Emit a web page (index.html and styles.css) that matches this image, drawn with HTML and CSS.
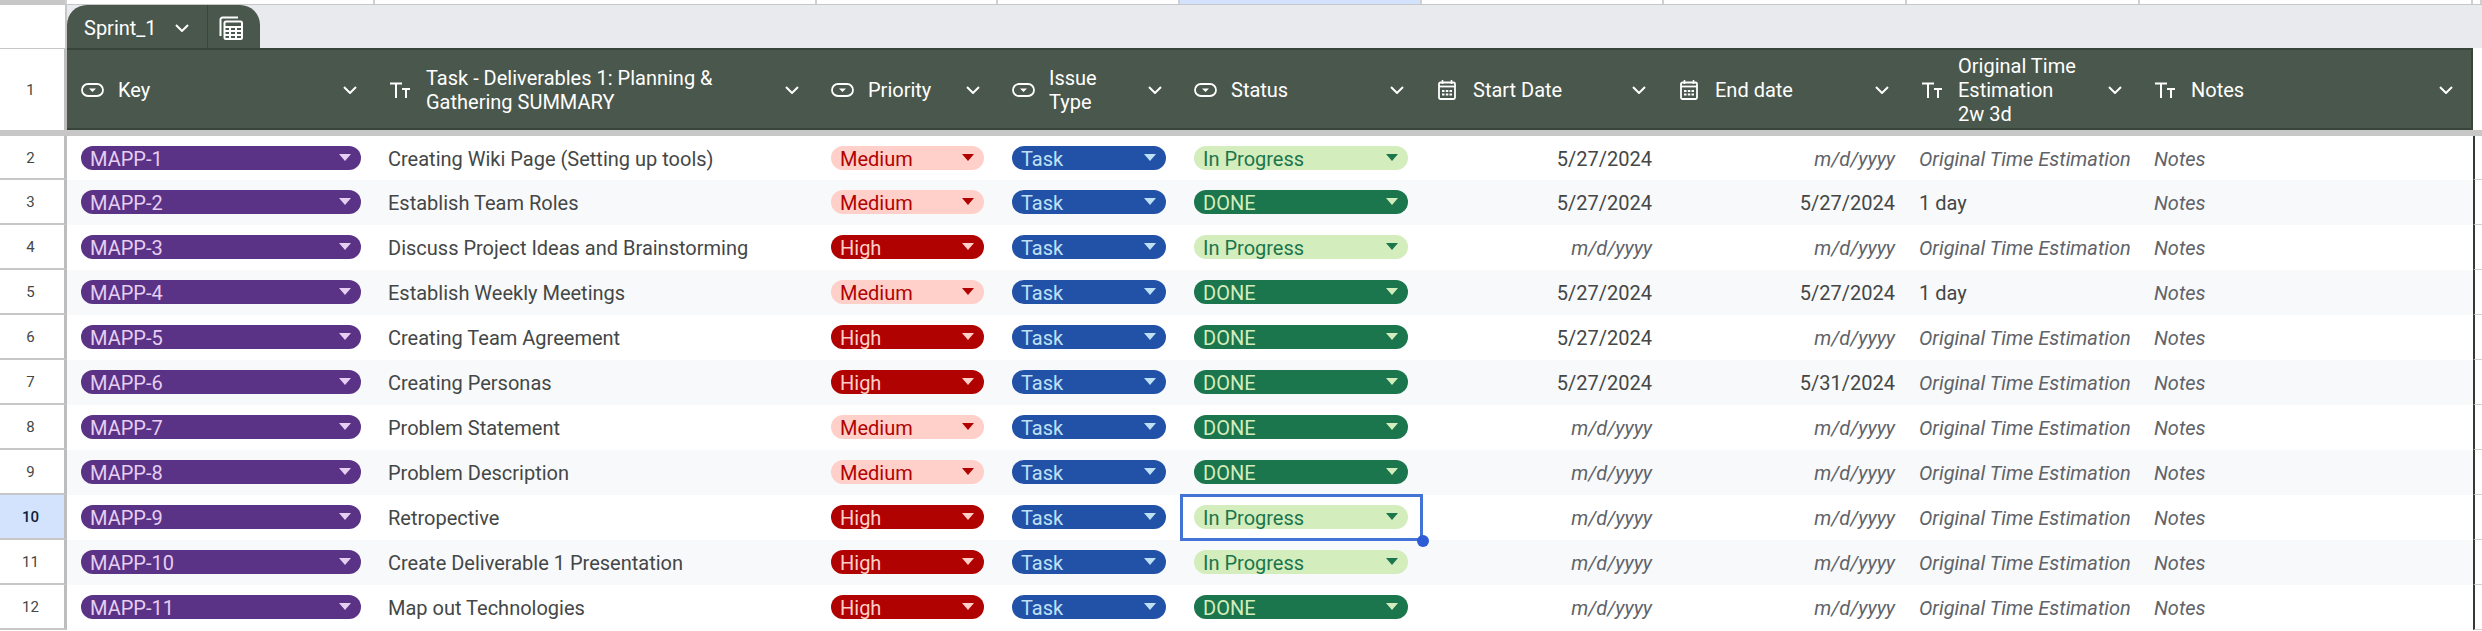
FILE: index.html
```html
<!DOCTYPE html>
<html>
  <head>
    <title>Sprint_1</title>
    <link rel="stylesheet" href="styles.css">
  </head>
  <body>
    <svg class="icon-defs" width="0" height="0">
      <symbol id="i-chevron" viewBox="0 0 14 8"><path d="M1 1l6 6 6-6" fill="none" stroke="currentColor" stroke-width="2"/></symbol>
      <symbol id="i-dropdown" viewBox="0 0 23 14"><rect x="1" y="1" width="21" height="12" rx="6" fill="none" stroke="currentColor" stroke-width="1.8"/><path d="M8 5.500h7l-3.500 3.500z" fill="currentColor"/></symbol>
      <symbol id="i-text" viewBox="0 0 20 16"><path d="M0 1.500h12M6 1.500V16M12 7h8M16 7v9" fill="none" stroke="currentColor" stroke-width="2"/></symbol>
      <symbol id="i-date" viewBox="0 0 18 20"><path d="M4.500 0v4M13.500 0v4" stroke="currentColor" stroke-width="1.600"/><rect x="1" y="2.500" width="16" height="16.500" rx="1.500" fill="none" stroke="currentColor" stroke-width="1.800"/><path d="M1 6.500h16" stroke="currentColor" stroke-width="1.800"/><path d="M4 10h2.500v2H4zM7.800 10h2.500v2H7.800zM11.500 10H14v2h-2.500zM4 13.500h2.500v2H4zM7.800 13.500h2.500v2H7.800zM11.500 13.500H14v2h-2.500z" fill="currentColor"/></symbol>
      <symbol id="i-calc" viewBox="0 0 24 24"><path d="M1.500 20V3.500a2 2 0 0 1 2-2H19" fill="none" stroke="currentColor" stroke-width="2"/><rect x="5.500" y="5.500" width="17.500" height="17.500" rx="1.500" fill="none" stroke="currentColor" stroke-width="2"/><path d="M5.500 11h17.500M5.500 15h17.500M5.500 19h17.500M11 11v12M17 11v12" fill="none" stroke="currentColor" stroke-width="2"/></symbol>
    </svg>

    <!-- column strip -->
    <div class="grid ruler">
      <div></div><div></div><div></div><div></div><div></div>
      <div class="ruler-active"></div><div></div><div></div><div></div><div></div><div></div>
    </div>

    <!-- table tab -->
    <div class="tabbar">
      <div class="tabbar-gutter"></div>
      <div class="tab">
        <span class="tab-name">Sprint_1</span>
        <svg class="tab-chevron"><use href="#i-chevron"/></svg>
        <span class="tab-sep"></span>
        <svg class="tab-calc"><use href="#i-calc"/></svg>
      </div>
    </div>

    <!-- header row -->
    <div class="grid header-row">
      <div class="gutter">1</div>
      <div class="hcell"><svg class="hicon icon-dropdown"><use href="#i-dropdown"/></svg><span class="hlabel">Key</span><svg class="hchevron"><use href="#i-chevron"/></svg></div>
      <div class="hcell"><svg class="hicon icon-text"><use href="#i-text"/></svg><span class="hlabel">Task - Deliverables 1: Planning &amp;<br>Gathering SUMMARY</span><svg class="hchevron"><use href="#i-chevron"/></svg></div>
      <div class="hcell"><svg class="hicon icon-dropdown"><use href="#i-dropdown"/></svg><span class="hlabel">Priority</span><svg class="hchevron"><use href="#i-chevron"/></svg></div>
      <div class="hcell"><svg class="hicon icon-dropdown"><use href="#i-dropdown"/></svg><span class="hlabel">Issue<br>Type</span><svg class="hchevron"><use href="#i-chevron"/></svg></div>
      <div class="hcell"><svg class="hicon icon-dropdown"><use href="#i-dropdown"/></svg><span class="hlabel">Status</span><svg class="hchevron"><use href="#i-chevron"/></svg></div>
      <div class="hcell"><svg class="hicon icon-date"><use href="#i-date"/></svg><span class="hlabel">Start Date</span><svg class="hchevron"><use href="#i-chevron"/></svg></div>
      <div class="hcell"><svg class="hicon icon-date"><use href="#i-date"/></svg><span class="hlabel">End date</span><svg class="hchevron"><use href="#i-chevron"/></svg></div>
      <div class="hcell"><svg class="hicon icon-text"><use href="#i-text"/></svg><span class="hlabel">Original Time<br>Estimation<br>2w 3d</span><svg class="hchevron"><use href="#i-chevron"/></svg></div>
      <div class="hcell"><svg class="hicon icon-text"><use href="#i-text"/></svg><span class="hlabel">Notes</span><svg class="hchevron"><use href="#i-chevron"/></svg></div>
      <div class="header-end"></div>
    </div>

    <div class="freeze-band"></div>

    <!-- data rows -->
    <div class="grid row first">
      <div class="gutter">2</div>
      <div class="cell"><span class="pill key">MAPP-1</span></div>
      <div class="cell">Creating Wiki Page (Setting up tools)</div>
      <div class="cell"><span class="pill medium">Medium</span></div>
      <div class="cell"><span class="pill task">Task</span></div>
      <div class="cell"><span class="pill progress">In Progress</span></div>
      <div class="cell date">5/27/2024</div>
      <div class="cell date hint">m/d/yyyy</div>
      <div class="cell hint">Original Time Estimation</div>
      <div class="cell hint">Notes</div>
      <div class="row-end"></div>
    </div>
    <div class="grid row alt">
      <div class="gutter">3</div>
      <div class="cell"><span class="pill key">MAPP-2</span></div>
      <div class="cell">Establish Team Roles</div>
      <div class="cell"><span class="pill medium">Medium</span></div>
      <div class="cell"><span class="pill task">Task</span></div>
      <div class="cell"><span class="pill done">DONE</span></div>
      <div class="cell date">5/27/2024</div>
      <div class="cell date">5/27/2024</div>
      <div class="cell">1 day</div>
      <div class="cell hint">Notes</div>
      <div class="row-end"></div>
    </div>
    <div class="grid row">
      <div class="gutter">4</div>
      <div class="cell"><span class="pill key">MAPP-3</span></div>
      <div class="cell">Discuss Project Ideas and Brainstorming</div>
      <div class="cell"><span class="pill high">High</span></div>
      <div class="cell"><span class="pill task">Task</span></div>
      <div class="cell"><span class="pill progress">In Progress</span></div>
      <div class="cell date hint">m/d/yyyy</div>
      <div class="cell date hint">m/d/yyyy</div>
      <div class="cell hint">Original Time Estimation</div>
      <div class="cell hint">Notes</div>
      <div class="row-end"></div>
    </div>
    <div class="grid row alt">
      <div class="gutter">5</div>
      <div class="cell"><span class="pill key">MAPP-4</span></div>
      <div class="cell">Establish Weekly Meetings</div>
      <div class="cell"><span class="pill medium">Medium</span></div>
      <div class="cell"><span class="pill task">Task</span></div>
      <div class="cell"><span class="pill done">DONE</span></div>
      <div class="cell date">5/27/2024</div>
      <div class="cell date">5/27/2024</div>
      <div class="cell">1 day</div>
      <div class="cell hint">Notes</div>
      <div class="row-end"></div>
    </div>
    <div class="grid row">
      <div class="gutter">6</div>
      <div class="cell"><span class="pill key">MAPP-5</span></div>
      <div class="cell">Creating Team Agreement</div>
      <div class="cell"><span class="pill high">High</span></div>
      <div class="cell"><span class="pill task">Task</span></div>
      <div class="cell"><span class="pill done">DONE</span></div>
      <div class="cell date">5/27/2024</div>
      <div class="cell date hint">m/d/yyyy</div>
      <div class="cell hint">Original Time Estimation</div>
      <div class="cell hint">Notes</div>
      <div class="row-end"></div>
    </div>
    <div class="grid row alt">
      <div class="gutter">7</div>
      <div class="cell"><span class="pill key">MAPP-6</span></div>
      <div class="cell">Creating Personas</div>
      <div class="cell"><span class="pill high">High</span></div>
      <div class="cell"><span class="pill task">Task</span></div>
      <div class="cell"><span class="pill done">DONE</span></div>
      <div class="cell date">5/27/2024</div>
      <div class="cell date">5/31/2024</div>
      <div class="cell hint">Original Time Estimation</div>
      <div class="cell hint">Notes</div>
      <div class="row-end"></div>
    </div>
    <div class="grid row">
      <div class="gutter">8</div>
      <div class="cell"><span class="pill key">MAPP-7</span></div>
      <div class="cell">Problem Statement</div>
      <div class="cell"><span class="pill medium">Medium</span></div>
      <div class="cell"><span class="pill task">Task</span></div>
      <div class="cell"><span class="pill done">DONE</span></div>
      <div class="cell date hint">m/d/yyyy</div>
      <div class="cell date hint">m/d/yyyy</div>
      <div class="cell hint">Original Time Estimation</div>
      <div class="cell hint">Notes</div>
      <div class="row-end"></div>
    </div>
    <div class="grid row alt">
      <div class="gutter">9</div>
      <div class="cell"><span class="pill key">MAPP-8</span></div>
      <div class="cell">Problem Description</div>
      <div class="cell"><span class="pill medium">Medium</span></div>
      <div class="cell"><span class="pill task">Task</span></div>
      <div class="cell"><span class="pill done">DONE</span></div>
      <div class="cell date hint">m/d/yyyy</div>
      <div class="cell date hint">m/d/yyyy</div>
      <div class="cell hint">Original Time Estimation</div>
      <div class="cell hint">Notes</div>
      <div class="row-end"></div>
    </div>
    <div class="grid row">
      <div class="gutter selected">10</div>
      <div class="cell"><span class="pill key">MAPP-9</span></div>
      <div class="cell">Retropective</div>
      <div class="cell"><span class="pill high">High</span></div>
      <div class="cell"><span class="pill task">Task</span></div>
      <div class="cell active"><span class="pill progress">In Progress</span><span class="selection"><span class="selection-dot"></span></span></div>
      <div class="cell date hint">m/d/yyyy</div>
      <div class="cell date hint">m/d/yyyy</div>
      <div class="cell hint">Original Time Estimation</div>
      <div class="cell hint">Notes</div>
      <div class="row-end"></div>
    </div>
    <div class="grid row alt">
      <div class="gutter">11</div>
      <div class="cell"><span class="pill key">MAPP-10</span></div>
      <div class="cell">Create Deliverable 1 Presentation</div>
      <div class="cell"><span class="pill high">High</span></div>
      <div class="cell"><span class="pill task">Task</span></div>
      <div class="cell"><span class="pill progress">In Progress</span></div>
      <div class="cell date hint">m/d/yyyy</div>
      <div class="cell date hint">m/d/yyyy</div>
      <div class="cell hint">Original Time Estimation</div>
      <div class="cell hint">Notes</div>
      <div class="row-end"></div>
    </div>
    <div class="grid row">
      <div class="gutter">12</div>
      <div class="cell"><span class="pill key">MAPP-11</span></div>
      <div class="cell">Map out Technologies</div>
      <div class="cell"><span class="pill high">High</span></div>
      <div class="cell"><span class="pill task">Task</span></div>
      <div class="cell"><span class="pill done">DONE</span></div>
      <div class="cell date hint">m/d/yyyy</div>
      <div class="cell date hint">m/d/yyyy</div>
      <div class="cell hint">Original Time Estimation</div>
      <div class="cell hint">Notes</div>
      <div class="row-end"></div>
    </div>
  </body>
</html>
```

FILE: styles.css
```css
html, body {
  height: 100%;
  overflow: hidden;
}

body {
  font-family: Roboto, "Liberation Sans", sans-serif;
  font-size: 20px;
  margin: 0;
  padding: 0;
  background-color: white;
  color: #444746;
}

.icon-defs {
  display: block;
  height: 0;
}

.grid {
  display: grid;
  grid-template-columns: 67px 308px 442px 181px 182px 242px 242px 243px 233px 333px 9px;
}

/* column strip */
.ruler {
  height: 4px;
  border-bottom: 1px solid #c7c7c7;
}

.ruler > div {
  border-right: 2px solid #d0d0d0;
  box-sizing: border-box;
}

.ruler > div:first-child {
  background-color: #c7c7c7;
}

.ruler-active {
  background-color: #d3e3fd;
}

/* tab */
.tabbar {
  display: flex;
  height: 43px;
  background-color: #e8eaed;
}

.tabbar-gutter {
  width: 65px;
  background-color: white;
  border-right: 2px solid #c7c7c7;
}

.tab {
  display: flex;
  align-items: center;
  width: 193px;
  box-sizing: border-box;
  padding: 2px 0 0 17px;
  background-color: #4a574c;
  border-radius: 20px 20px 0 0;
  color: white;
}

.tab-name {
  width: 74px;
  white-space: nowrap;
}

.tab-chevron {
  width: 14px;
  height: 8px;
  margin-left: 17px;
}

.tab-sep {
  width: 1px;
  height: 43px;
  margin: -2px 0 0 18px;
  background-color: #3a453c;
}

.tab-calc {
  width: 24px;
  height: 24px;
  margin-left: 11px;
}

/* header */
.header-row {
  height: 82px;
}

.gutter {
  display: flex;
  align-items: center;
  justify-content: center;
  box-sizing: border-box;
  padding: 1px 3px 0 0;
  font-size: 15px;
  color: #444746;
  background-color: white;
  border-right: 3px solid #bdbdbd;
  border-bottom: 2px solid #c7c7c7;
}

.header-row .gutter {
  border-bottom: none;
  border-top: 1px solid #c7c7c7;
}

.gutter.selected {
  background-color: #d3e3fd;
  color: #0b1f3a;
  font-weight: 500;
}

.hcell {
  display: flex;
  align-items: center;
  padding: 2px 18px 0 14px;
  background-color: #4a574c;
  border-top: 2px solid #39443b;
  border-bottom: 2px solid #39443b;
  color: white;
  line-height: 24px;
  min-width: 0;
  white-space: nowrap;
}

.hcell:nth-child(10) {
  border-right: 2px solid #39443b;
}

.hicon {
  flex: none;
}

.icon-dropdown {
  width: 23px;
  height: 14px;
  margin-right: 14px;
}

.icon-text {
  width: 20px;
  height: 16px;
  margin-left: 1px;
  margin-right: 16px;
}

.icon-date {
  width: 18px;
  height: 20px;
  margin-left: 2px;
  margin-right: 17px;
}

.hlabel {
  flex: 1;
  min-width: 0;
}

.hchevron {
  flex: none;
  width: 14px;
  height: 8px;
}

.freeze-band {
  height: 6px;
  background-color: #c7c7c7;
}

/* rows */
.row {
  height: 45px;
  align-items: stretch;
}

.row.first {
  height: 44px;
}

.cell {
  display: flex;
  align-items: center;
  padding: 1px 14px 0 14px;
  min-width: 0;
  white-space: nowrap;
}

.cell:nth-child(3) {
  padding-left: 13px;
}

.row.alt .cell {
  background-color: #f8f9fa;
}

.cell.date {
  justify-content: flex-end;
  padding-right: 12px;
}

.cell.hint {
  font-style: italic;
  color: #5f6368;
}

.cell:nth-child(9) {
  padding-left: 12px;
}

.row-end {
  border-left: 2px solid #333a35;
  border-bottom: 1px solid #d0d0d0;
}

/* dropdown chips */
.pill {
  position: relative;
  display: block;
  flex: 1;
  height: 24px;
  margin-top: -2px;
  line-height: 26px;
  padding-left: 9px;
  border-radius: 12px;
}

.pill::after {
  content: "";
  position: absolute;
  top: 8px;
  right: 10px;
  border-left: 6px solid transparent;
  border-right: 6px solid transparent;
  border-top: 7px solid currentColor;
}

.pill.key {
  background-color: #5a3286;
  color: #e6cff2;
}

.pill.medium {
  background-color: #ffcfc9;
  color: #b10202;
}

.pill.high {
  background-color: #b10202;
  color: #ffcfc9;
}

.pill.task {
  background-color: #2251a8;
  color: #bfe1f6;
}

.pill.progress {
  background-color: #d4edbc;
  color: #1b754d;
}

.pill.done {
  background-color: #1b754d;
  color: #d4edbc;
}

/* selected cell */
.cell.active {
  position: relative;
}

.selection {
  position: absolute;
  top: -1px;
  left: 0;
  right: -1px;
  bottom: -1px;
  border: 3px solid #4373d6;
}

.selection-dot {
  position: absolute;
  right: -9px;
  bottom: -9px;
  width: 12px;
  height: 12px;
  border-radius: 50%;
  background-color: #2e5bd6;
}
```
